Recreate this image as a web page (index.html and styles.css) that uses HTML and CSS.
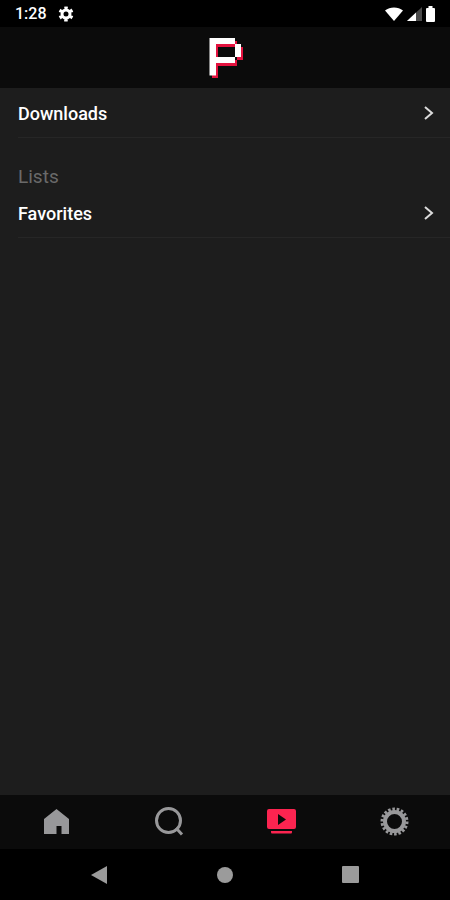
FILE: index.html
```html
<!DOCTYPE html>
<html lang="en">
<head>
  <meta charset="UTF-8" />
  <meta name="viewport" content="width=device-width, initial-scale=1.0"/>
  <title>Library</title>
  <link rel="stylesheet" href="styles.css">
</head>
<body>
  <div class="status-bar">
    <span class="time">1:28</span>
    <svg class="status-gear" width="16" height="16" viewBox="0 0 16 16">
      <circle cx="8" cy="8" r="4" fill="none" stroke="#fff" stroke-width="3"/>
      <circle cx="8" cy="8" r="6" fill="none" stroke="#fff" stroke-width="3" pathLength="12" stroke-dasharray="1 1" stroke-dashoffset="0.5" transform="rotate(30 8 8)"/>
    </svg>
    <div class="status-icons">
      <svg width="18" height="14" viewBox="0 0 18 14">
        <path d="M0 3.500C5 -0.500 13 -0.500 18 3.500L9 14Z" fill="#fff"/>
      </svg>
      <svg width="15" height="14" viewBox="0 0 15 14">
        <path d="M15 0V14H0Z" fill="#4a4a4a"/>
        <path d="M9 5.600V14H0Z" fill="#fff"/>
      </svg>
      <svg width="9" height="16" viewBox="0 0 9 16">
        <path d="M2.500 0H6.500V2H8Q9 2 9 3V15Q9 16 8 16H1Q0 16 0 15V3Q0 2 1 2H2.500Z" fill="#fff"/>
      </svg>
    </div>
  </div>

  <header class="header">
    <svg width="36" height="42" viewBox="0 0 36 42">
      <path d="M5 4H30V10H36V23H30V29H11V41H5ZM11 10V23H30V10Z" fill="#e3123f" fill-rule="evenodd"/>
      <path d="M2.500 1H28V7H34V20H28V26H9V38.500H2.500ZM9 7V20H28V7Z" fill="#fff" fill-rule="evenodd"/>
    </svg>
  </header>

  <main class="content">
    <a class="row" href="#downloads">
      <span>Downloads</span>
      <svg width="10" height="16" viewBox="0 0 10 16"><path d="M1 1L8 7L1 13" /></svg>
    </a>
    <h2 class="section-title">Lists</h2>
    <a class="row" href="#favorites">
      <span>Favorites</span>
      <svg width="10" height="16" viewBox="0 0 10 16"><path d="M1 1L8 7L1 13" /></svg>
    </a>
  </main>

  <nav class="tabs">
    <a class="tab" href="#home" aria-label="Home">
      <svg width="30" height="30" viewBox="0 0 30 30">
        <path d="M15.500 2L28 12V27H20.500V19H15.500V27H3V12Z" fill="currentColor"/>
      </svg>
    </a>
    <a class="tab" href="#search" aria-label="Search">
      <svg width="30" height="30" viewBox="0 0 30 30" fill="none" stroke="currentColor" stroke-width="3">
        <circle cx="14.500" cy="13.500" r="12"/>
        <path d="M22 21L28 27.500"/>
      </svg>
    </a>
    <a class="tab active" href="#library" aria-label="Library">
      <svg width="30" height="30" viewBox="0 0 30 30">
        <path d="M3 2H28Q30 2 30 4V20Q30 22 28 22H3Q1 22 1 20V4Q1 2 3 2ZM12 7V18L20 12.500Z" fill="currentColor" fill-rule="evenodd"/>
        <path d="M5 24H26V25Q26 26.500 25 26.500H6Q5 26.500 5 25Z" fill="currentColor"/>
      </svg>
    </a>
    <a class="tab" href="#settings" aria-label="Settings">
      <svg width="30" height="30" viewBox="0 0 30 30" fill="none" stroke="currentColor">
        <circle cx="15.500" cy="14.500" r="9.500" stroke-width="4"/>
        <circle cx="15.500" cy="14.500" r="12.500" stroke-width="3" pathLength="36" stroke-dasharray="1.200 0.800"/>
      </svg>
    </a>
  </nav>

  <div class="system-nav">
    <button class="system-button" aria-label="Back">
      <svg width="18" height="18" viewBox="0 0 18 18"><path d="M1 9L17 0V18Z"/></svg>
    </button>
    <button class="system-button" aria-label="Home screen">
      <svg width="18" height="18" viewBox="0 0 18 18"><circle cx="9" cy="9" r="8"/></svg>
    </button>
    <button class="system-button" aria-label="Recent apps">
      <svg width="18" height="18" viewBox="0 0 18 18"><rect width="17" height="17" rx="1"/></svg>
    </button>
  </div>
</body>
</html>
```
FILE: styles.css
```css
* {
  box-sizing: border-box;
}

body {
  margin: 0;
  min-height: 100vh;
  display: flex;
  flex-direction: column;
  font-family: Roboto, sans-serif;
  background-color: #1d1d1d;
  color: #ffffff;
}

svg {
  display: block;
}

.status-bar {
  display: flex;
  align-items: center;
  height: 27px;
  padding: 0 15px;
  background-color: #000000;
}

.time {
  font-size: 16px;
  font-weight: 500;
}

.status-gear {
  margin-left: 11px;
}

.status-icons {
  display: flex;
  align-items: center;
  gap: 4px;
  margin-left: auto;
}

.header {
  display: flex;
  justify-content: center;
  align-items: center;
  height: 61px;
  background-color: #0b0b0b;
}

.content {
  flex-grow: 1;
}

.row {
  display: flex;
  justify-content: space-between;
  align-items: center;
  height: 50px;
  margin-left: 18px;
  padding: 2px 16px 0 0;
  border-bottom: 1px solid #262626;
  color: #ffffff;
  font-size: 18px;
  font-weight: 500;
  text-decoration: none;
}

.row svg {
  fill: none;
  stroke: #dcdcdc;
  stroke-width: 2;
}

.section-title {
  margin: 27px 0 0 18px;
  color: #6a6a6a;
  font-size: 19px;
  font-weight: 400;
  line-height: 23px;
}

.tabs {
  display: flex;
  height: 54px;
  background-color: #0b0b0b;
}

.tab {
  flex: 1;
  display: flex;
  justify-content: center;
  align-items: center;
  color: #98989a;
}

.tab.active {
  color: #fb2450;
}

.system-nav {
  display: flex;
  justify-content: center;
  height: 51px;
  background-color: #000000;
}

.system-button {
  display: flex;
  justify-content: center;
  align-items: center;
  width: 28%;
  padding: 0;
  border: none;
  background: none;
}

.system-button svg {
  fill: #9b9b9b;
}
```
